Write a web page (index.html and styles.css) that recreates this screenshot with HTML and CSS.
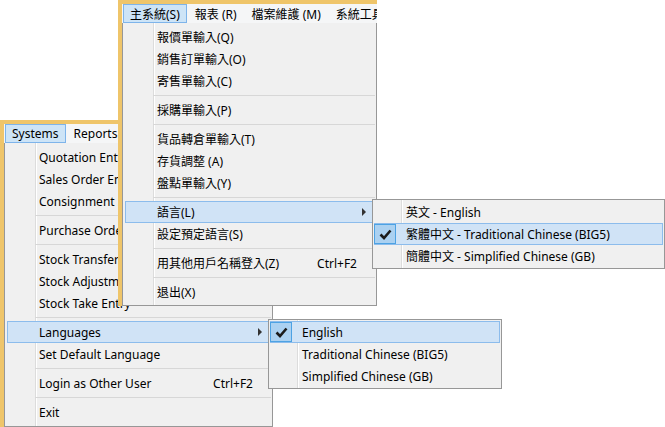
FILE: index.html
```html
<!DOCTYPE html>
<html lang="zh-Hant">
<head>
    <meta charset="UTF-8">
    <title>Language menu</title>
    <link rel="stylesheet" href="styles.css">
</head>
<body>
    <div class="desk">

        <!-- English screenshot (behind) -->
        <div class="shot shot-en">
            <div class="menubar">
                <span class="menubar-item open">Systems</span>
                <span class="menubar-item">Reports</span>
            </div>
            <div class="menu">
                <div class="menu-item">Quotation Entry</div>
                <div class="menu-item">Sales Order Entry</div>
                <div class="menu-item">Consignment Sales Entry</div>
                <div class="menu-sep"></div>
                <div class="menu-item">Purchase Order Entry</div>
                <div class="menu-sep"></div>
                <div class="menu-item">Stock Transfer Entry</div>
                <div class="menu-item">Stock Adjustment</div>
                <div class="menu-item">Stock Take Entry</div>
                <div class="menu-sep"></div>
                <div class="menu-item active">Languages<span class="arrow"></span></div>
                <div class="menu-item">Set Default Language</div>
                <div class="menu-sep"></div>
                <div class="menu-item">Login as Other User<span class="shortcut">Ctrl+F2</span></div>
                <div class="menu-sep"></div>
                <div class="menu-item">Exit</div>
            </div>
        </div>

        <div class="submenu submenu-en">
            <div class="menu-item checked active">
                <span class="check"><svg width="22" height="20" viewBox="0 0 22 20"><path d="M6.5 10.5 L10 14 L16.5 6.5" fill="none" stroke="#1b1b1b" stroke-width="2.6"/></svg></span>
                English
            </div>
            <div class="menu-item checked"><span class="check"></span>Traditional Chinese (BIG5)</div>
            <div class="menu-item checked"><span class="check"></span>Simplified Chinese (GB)</div>
        </div>

        <!-- Chinese screenshot (in front) -->
        <div class="shot shot-zh">
            <div class="menubar">
                <span class="menubar-item open">主系統(S)</span>
                <span class="menubar-item">報表 (R)</span>
                <span class="menubar-item">檔案維護 (M)</span>
                <span class="menubar-item">系統工具 (T)</span>
            </div>
            <div class="menu">
                <div class="menu-item">報價單輸入(Q)</div>
                <div class="menu-item">銷售訂單輸入(O)</div>
                <div class="menu-item">寄售單輸入(C)</div>
                <div class="menu-sep"></div>
                <div class="menu-item">採購單輸入(P)</div>
                <div class="menu-sep"></div>
                <div class="menu-item">貨品轉倉單輸入(T)</div>
                <div class="menu-item">存貨調整 (A)</div>
                <div class="menu-item">盤點單輸入(Y)</div>
                <div class="menu-sep"></div>
                <div class="menu-item active">語言(L)<span class="arrow"></span></div>
                <div class="menu-item">設定預定語言(S)</div>
                <div class="menu-sep"></div>
                <div class="menu-item">用其他用戶名稱登入(Z)<span class="shortcut">Ctrl+F2</span></div>
                <div class="menu-sep"></div>
                <div class="menu-item">退出(X)</div>
            </div>
        </div>

        <div class="submenu submenu-zh">
            <div class="menu-item checked"><span class="check"></span>英文 - English</div>
            <div class="menu-item checked active">
                <span class="check"><svg width="22" height="20" viewBox="0 0 22 20"><path d="M6.5 10.5 L10 14 L16.5 6.5" fill="none" stroke="#1b1b1b" stroke-width="2.6"/></svg></span>
                繁體中文 - Traditional Chinese (BIG5)
            </div>
            <div class="menu-item checked"><span class="check"></span>簡體中文 - Simplified Chinese (GB)</div>
        </div>

    </div>
</body>
</html>
```

FILE: styles.css
```css
body {
    margin: 0;
    background-color: #fff;
    font-family: "Noto Sans", "Noto Sans CJK TC", sans-serif;
    font-size: 12px;
    color: #000;
    overflow: hidden;
}

.desk {
    position: relative;
    width: 665px;
    height: 427px;
    overflow: hidden;
}

/* Window captures */
.shot {
    position: absolute;
    box-sizing: border-box;
    display: flex;
    flex-direction: column;
    border-top: 4px solid #efc56a;
    border-left: 4px solid #efc56a;
    overflow: hidden;
}

.shot-en {
    left: 0;
    top: 120px;
    width: 273px;
    height: 307px;
}

.shot-zh {
    left: 118px;
    top: 0;
    width: 259px;
    height: 306px;
}

/* Menu bar */
.menubar {
    display: flex;
    height: 19px;
    padding-left: 1px;
    background-color: #f5f6f7;
    white-space: nowrap;
}

.menubar-item {
    display: flex;
    align-items: center;
    box-sizing: border-box;
    height: 19px;
    padding: 0 6px;
    margin-right: 1px;
    border: 1px solid transparent;
}

.menubar-item.open {
    background-color: #cde4f7;
    border-color: #7eb4ea;
}

/* Drop-down menu */
.menu {
    flex: 1;
    display: flex;
    flex-direction: column;
    padding: 3px 1px 2px 2px;
    border: 1px solid #979797;
    border-top: none;
    background:
        linear-gradient(to right, #dcdcdc 0 1px, #fff 1px 2px) 30px 0 / 2px 100% no-repeat,
        #f0f0f0;
    white-space: nowrap;
}

.menu-item {
    display: flex;
    align-items: center;
    flex-shrink: 0;
    box-sizing: border-box;
    height: 22px;
    padding-left: 31px;
    border: 1px solid transparent;
}

.menu-item.active {
    background-color: #d0e3f6;
    border-color: #8cbcec;
}

.menu-sep {
    flex-shrink: 0;
    height: 1px;
    margin: 3px 0 3px 28px;
    background-color: #d7d7d7;
}

.shortcut {
    margin-left: auto;
    padding-right: 17px;
}

.arrow {
    margin-left: auto;
    margin-right: 8px;
    width: 0;
    height: 0;
    border-left: 4px solid #333;
    border-top: 4px solid transparent;
    border-bottom: 4px solid transparent;
}

/* Language sub-menus */
.submenu {
    position: absolute;
    box-sizing: border-box;
    display: flex;
    flex-direction: column;
    height: 70px;
    padding: 1px;
    border: 1px solid #979797;
    background:
        linear-gradient(to right, #dcdcdc 0 1px, #fff 1px 2px) 28px 0 / 2px 100% no-repeat,
        #f0f0f0;
    white-space: nowrap;
}

.submenu-en {
    left: 268px;
    top: 319px;
    width: 234px;
}

.submenu-zh {
    left: 372px;
    top: 199px;
    width: 293px;
}

.submenu .menu-item.checked {
    padding-left: 0;
    border-left: none;
}

.check {
    box-sizing: border-box;
    width: 22px;
    height: 20px;
    margin-right: 10px;
    flex-shrink: 0;
}

.menu-item.active .check {
    background-color: #abd1f1;
    border: 1px solid #4da2e3;
}

.check svg {
    display: block;
    margin: -1px;
}
```
